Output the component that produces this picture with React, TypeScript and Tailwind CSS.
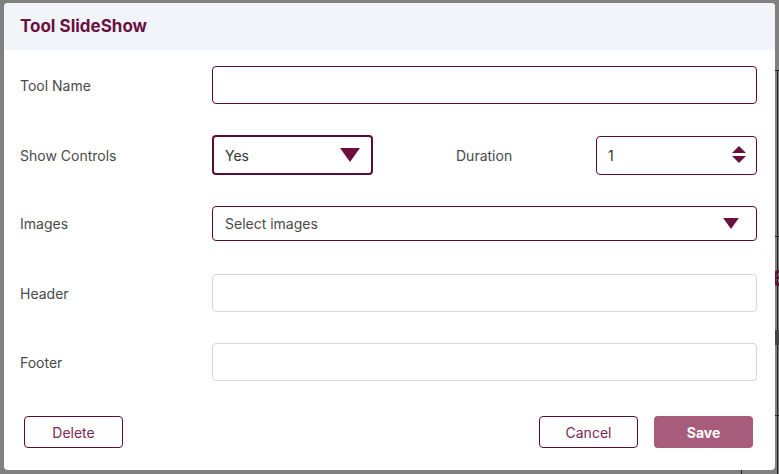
const Caret = ({ className }: { className: string }) => (
  <svg viewBox="0 0 20 14" className={className}>
    <path d="M0 0 H20 L10 14 Z" fill="#6b0f3c" />
  </svg>
);

const Spinner = () => (
  <svg viewBox="0 0 14 18" className="h-[18px] w-[14px]">
    <path d="M7 0 L14 7 H0 Z" fill="#6b0f3c" />
    <path d="M0 10 H14 L7 17 Z" fill="#6b0f3c" />
  </svg>
);

const Label = ({ children }: { children: React.ReactNode }) => (
  <div className="w-[192px] shrink-0 text-[14px] text-[#4a4a4a]">{children}</div>
);

export default function App() {
  return (
    <div
      className="relative h-[474px] w-[779px] overflow-hidden bg-[#808080]"
      style={{ fontFamily: "Inter, 'Open Sans', sans-serif" }}
    >
      {/* page behind the overlay */}
      <div className="absolute left-[775px] top-[70px] h-px w-[4px] bg-[#222]" />
      <div className="absolute left-[777px] top-[70px] h-[404px] w-px bg-[#222]" />
      <div className="absolute left-[775px] top-[236px] h-px w-[4px] bg-[#222]" />
      <div className="absolute left-[771px] top-[262px] text-[28px] font-bold leading-none text-[#5a1030]">e</div>
      <div className="absolute left-[775px] top-[330px] h-[15px] w-[4px] bg-[#444]" />
      <div className="absolute left-[775px] top-[415px] h-px w-[4px] bg-[#222]" />
      <div className="absolute left-[741px] top-[470px] h-[4px] w-px bg-[#222]" />

      <div className="relative ml-[4px] mt-[3px] flex h-[467px] w-[771px] flex-col overflow-hidden rounded-[4px] bg-white">
        <div className="flex h-[47px] items-center bg-[#f1f4f8] px-[16px]">
          <h2 className="text-[17px] font-bold text-[#6b1142]">Tool SlideShow</h2>
        </div>

        <div className="flex flex-col pl-[16px] pr-[18px] pt-[16px]">
          <div className="flex items-center">
            <Label>Tool Name</Label>
            <input className="h-[38px] flex-1 rounded-[4px] border border-[#5a0d33] px-3 outline-none" />
          </div>

          <div className="mt-[31px] flex items-center">
            <Label>Show Controls</Label>
            <div className="flex h-[40px] w-[161px] items-center justify-between rounded-[4px] border-2 border-[#5a0d33] pl-[11px] pr-[11px]">
              <span className="text-[14px] text-[#333]">Yes</span>
              <Caret className="h-[14px] w-[20px]" />
            </div>
            <div className="ml-[83px] w-[140px] text-[14px] text-[#4a4a4a]">Duration</div>
            <div className="flex h-[39px] w-[161px] items-center justify-between rounded-[4px] border border-[#5a0d33] pl-[11px] pr-[10px]">
              <span className="text-[14px] text-[#333]">1</span>
              <Spinner />
            </div>
          </div>

          <div className="mt-[31px] flex items-center">
            <Label>Images</Label>
            <div className="flex h-[35px] flex-1 items-center justify-between rounded-[4px] border border-[#5a0d33] pl-[12px] pr-[15px]">
              <span className="text-[14px] text-[#4a4a4a]">Select images</span>
              <Caret className="h-[11px] w-[20px]" />
            </div>
          </div>

          <div className="mt-[33px] flex items-center">
            <Label>Header</Label>
            <input className="h-[38px] flex-1 rounded-[4px] border border-[#d6d6d6] px-3 outline-none" />
          </div>

          <div className="mt-[31px] flex items-center">
            <Label>Footer</Label>
            <input className="h-[38px] flex-1 rounded-[4px] border border-[#d6d6d6] px-3 outline-none" />
          </div>
        </div>

        <div className="mt-[35px] flex items-center pl-[20px] pr-[22px]">
          <button className="h-[32px] w-[99px] rounded-[4px] border border-[#5a0d33] text-[14px] text-[#7a2a52]">
            Delete
          </button>
          <button className="ml-auto h-[32px] w-[99px] rounded-[4px] border border-[#5a0d33] text-[14px] text-[#7a2a52]">
            Cancel
          </button>
          <button className="ml-[16px] h-[32px] w-[99px] rounded-[4px] bg-[#a65c7a] text-[14px] font-bold text-white">
            Save
          </button>
        </div>
      </div>
    </div>
  );
}
